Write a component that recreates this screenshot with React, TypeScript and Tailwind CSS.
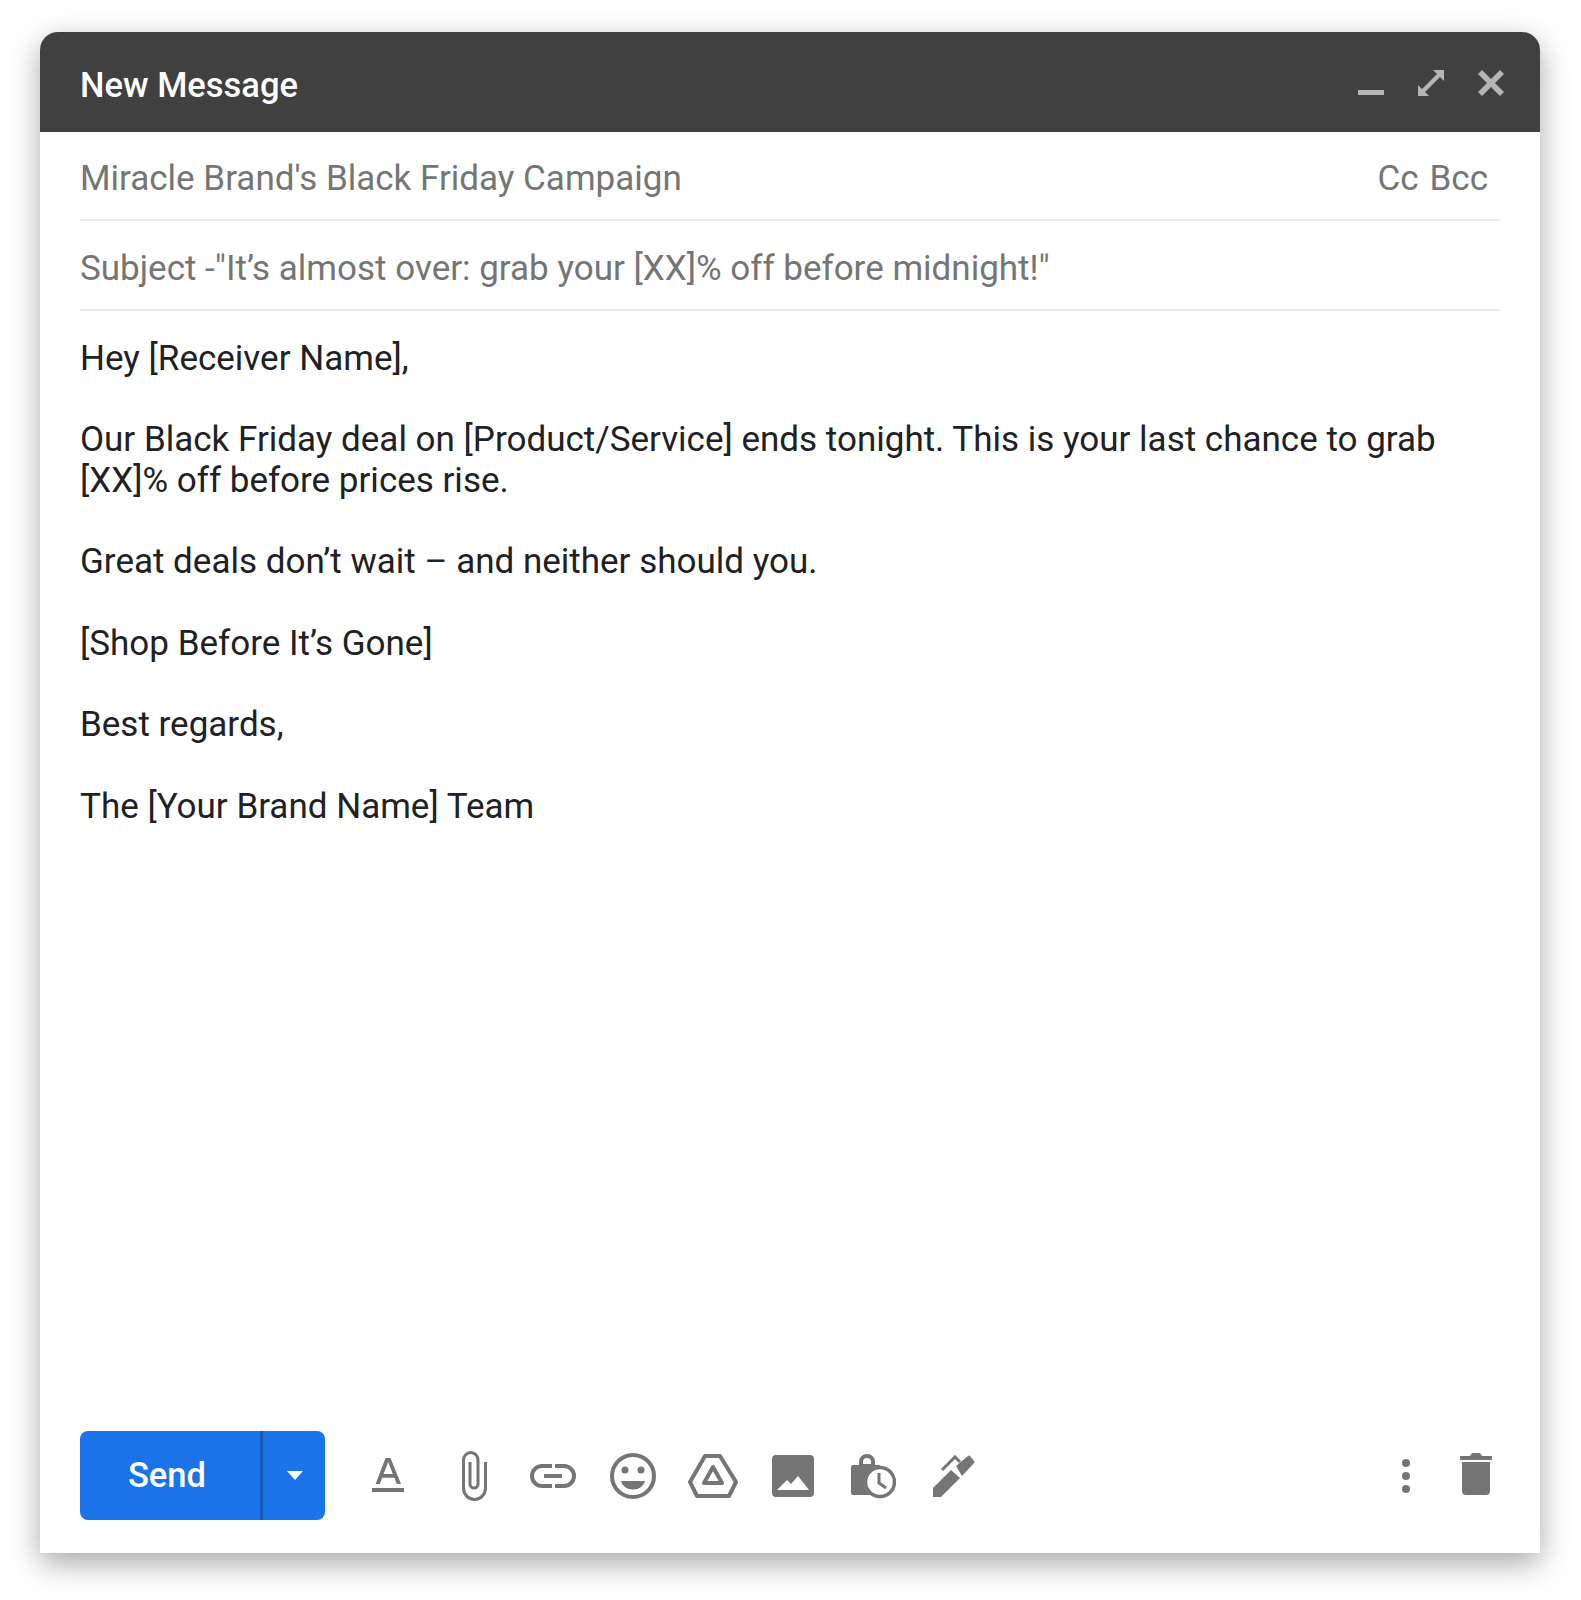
const Ico = ({ className, children, vb = '0 0 24 24' }: { className: string; children: React.ReactNode; vb?: string }) => (
  <svg viewBox={vb} className={className} fill="#757575">
    {children}
  </svg>
)

export default function App() {
  return (
    <div className="min-h-[1600px] bg-white pt-8 pl-10 font-['Roboto',sans-serif]">
      <div className="flex h-[1521px] w-[1500px] flex-col rounded-t-[18px] bg-white shadow-[0_10px_30px_rgba(0,0,0,0.35)]">
        {/* Title bar */}
        <div className="flex h-[100px] items-center justify-between rounded-t-[18px] bg-[#404040] pl-10 pr-9">
          <span className="mt-2 text-[34.5px] font-medium text-white">New Message</span>
          <div className="flex items-center">
            <svg viewBox="0 0 26 5" className="mt-[20px] mr-[34px] h-[5px] w-[26px]">
              <rect width="26" height="5" fill="#b5b5b5" />
            </svg>
            <svg viewBox="0 0 26 26" className="mt-[2px] mr-[34px] h-[26px] w-[26px]" fill="#b5b5b5">
              <path d="M15 0h11v11l-4-4L7 22l4 4H0V15l4 4L19 4z" />
            </svg>
            <svg viewBox="0 0 26 26" className="mt-[2px] h-[26px] w-[26px]" fill="#b5b5b5">
              <path d="M4 0l9 9 9-9 4 4-9 9 9 9-4 4-9-9-9 9-4-4 9-9-9-9z" />
            </svg>
          </div>
        </div>

        {/* Recipients */}
        <div className="mx-10 flex h-[89px] items-center justify-between border-b-2 border-[#ececec] pt-2 pr-3 text-[35px] text-[#757575]">
          <span>Miracle Brand's Black Friday Campaign</span>
          <div className="flex gap-[11px]">
            <span>Cc</span>
            <span>Bcc</span>
          </div>
        </div>

        {/* Subject */}
        <div className="mx-10 flex h-[90px] items-center border-b-2 border-[#ececec] pt-2 text-[35px] text-[#757575]">
          Subject -"It’s almost over: grab your [XX]% off before midnight!"
        </div>

        {/* Body */}
        <div className="mx-10 flex-1 pt-[28px] text-[35px] leading-[40.7px] text-[#202124]">
          <p>Hey [Receiver Name],</p>
          <p className="mt-[40.7px]">
            Our Black Friday deal on [Product/Service] ends tonight. This is your last chance to grab [XX]% off before prices rise.
          </p>
          <p className="mt-[40.7px]">Great deals don’t wait – and neither should you.</p>
          <p className="mt-[40.7px]">[Shop Before It’s Gone]</p>
          <p className="mt-[40.7px]">Best regards,</p>
          <p className="mt-[40.7px]">The [Your Brand Name] Team</p>
        </div>

        {/* Toolbar */}
        <div className="mb-[33px] flex items-center px-10">
          <div className="flex h-[89px] w-[245px] rounded-lg bg-[#1a73e8] text-white">
            <div className="flex w-[183px] items-center justify-center border-r-[3px] border-[#1658b8] pr-[6px] text-[34.5px] font-medium">
              Send
            </div>
            <div className="flex flex-1 items-center justify-center pl-[2px]">
              <svg viewBox="0 0 16 9" className="h-[9px] w-[16px]" fill="#fff">
                <path d="M0 0h16l-8 9z" />
              </svg>
            </div>
          </div>

          <div className="ml-[46px] flex items-center">
            {/* Format */}
            <svg viewBox="0 0 34 36" className="h-[36px] w-[34px]" fill="#757575">
              <path d="M14.500 0h5L30 26h-4.200l-2.400-6.300H11.200L8.800 26H4.600zM12.600 16h9.200L17.200 4zM1 30h32v4H1z" />
            </svg>
            {/* Attach */}
            <svg viewBox="0 0 25 50" className="ml-[57px] h-[50px] w-[25px]" fill="none" stroke="#757575" strokeWidth="3">
              <path d="M23.500 11V37a11 11.500 0 0 1-22 0V9a7.250 7.500 0 0 1 14.500 0V33a4 4 0 0 1-8 0V11" />
            </svg>
            {/* Link */}
            <svg viewBox="0 0 46 24" className="ml-[43px] h-[24px] w-[46px]" fill="none" stroke="#757575" strokeWidth="4">
              <path d="M22 2H12C6.500 2 2 6.500 2 12s4.500 10 10 10h10M25 2h9c5.500 0 10 4.500 10 10s-4.500 10-10 10h-9M14 12h18" />
            </svg>
            {/* Emoji */}
            <svg viewBox="0 0 46 46" className="ml-[34px] h-[46px] w-[46px]">
              <circle cx="23" cy="23" r="21" fill="none" stroke="#757575" strokeWidth="4" />
              <circle cx="15" cy="17" r="3.500" fill="#757575" />
              <circle cx="31" cy="17" r="3.500" fill="#757575" />
              <path d="M11 28h24c-1.500 5.500-6 8.500-12 8.500S12.500 33.500 11 28z" fill="#757575" />
            </svg>
            {/* Drive */}
            <svg viewBox="0 0 50 44" className="ml-[32px] h-[44px] w-[50px]" fill="none" stroke="#757575" strokeWidth="4" strokeLinejoin="round">
              <path d="M17 2h15l16 26-7 14H9L2 28z" />
              <path d="M25 13l9 16H16z" />
            </svg>
            {/* Photo */}
            <Ico vb="0 0 42 42" className="ml-[34px] h-[42px] w-[42px]">
              <path d="M4 0h34a4 4 0 014 4v34a4 4 0 01-4 4H4a4 4 0 01-4-4V4a4 4 0 014-4zm1 35h32L26 21l-7 8-4-4z" fillRule="evenodd" />
            </Ico>
            {/* Confidential */}
            <svg viewBox="0 0 46 46" className="ml-[36px] h-[46px] w-[46px]">
              <path d="M3 12h6V9a8 8 0 0116 0v3h5v30H3a2 2 0 01-2-2V14a2 2 0 012-2zm10-1h8V9a4 4 0 00-8 0z" fill="#757575" fillRule="evenodd" />
              <circle cx="30" cy="29" r="16" fill="#fff" />
              <circle cx="30" cy="29" r="14.500" fill="none" stroke="#757575" strokeWidth="3.500" />
              <path d="M29 20v10l7 5" fill="none" stroke="#757575" strokeWidth="3" />
            </svg>
            {/* Signature */}
            <svg viewBox="0 0 42 42" className="ml-[37px] h-[42px] w-[42px]" fill="#757575">
              <path d="M0 33 18 15l9 8L8 42H0z" />
              <path d="M23 11 35 1q1-1 2 0l4 5q1 1 0 2L29 21z" />
              <path d="M9 15 22 2l5 5" fill="none" stroke="#757575" strokeWidth="3" />
            </svg>
          </div>

          <div className="ml-auto flex items-center">
            <svg viewBox="0 0 8 34" className="h-[34px] w-[8px]" fill="#757575">
              <circle cx="4" cy="4" r="4" />
              <circle cx="4" cy="17" r="4" />
              <circle cx="4" cy="30" r="4" />
            </svg>
            <svg viewBox="0 0 32 42" className="ml-[50px] mr-[8px] mt-[-4px] h-[42px] w-[32px]" fill="#757575">
              <path d="M0 3h10l2-3h8l2 3h10v4H0zM2 9h28v29a4 4 0 01-4 4H6a4 4 0 01-4-4z" />
            </svg>
          </div>
        </div>
      </div>
    </div>
  )
}
